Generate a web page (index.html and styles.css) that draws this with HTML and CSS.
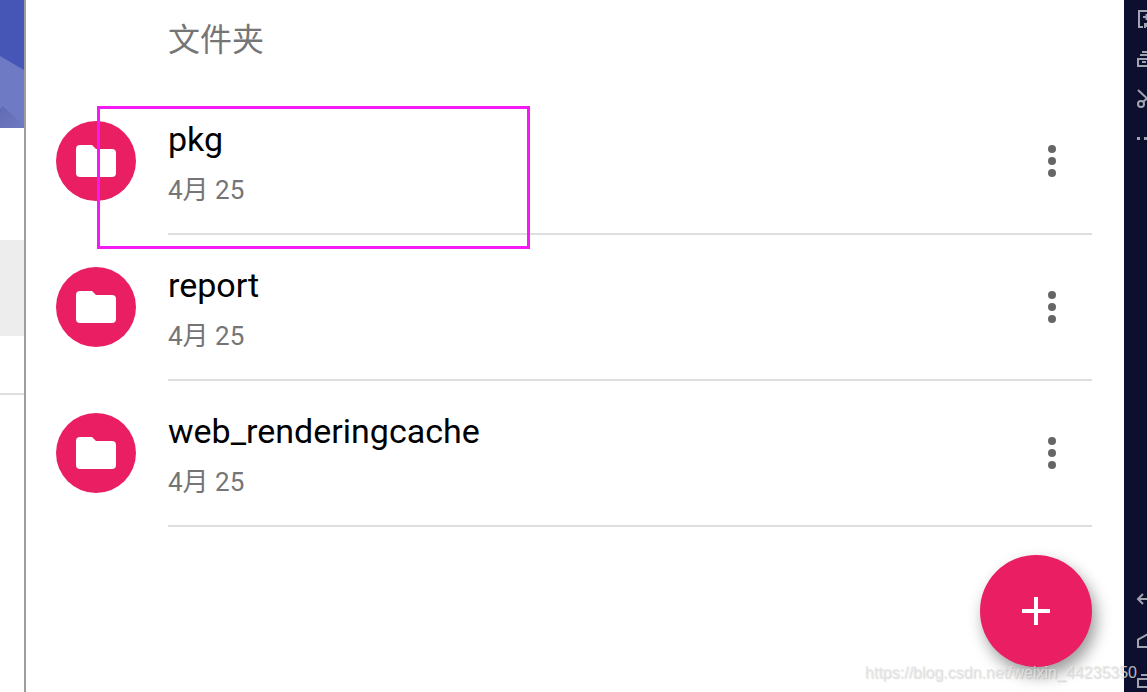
FILE: index.html
```html
<!DOCTYPE html>
<html lang="zh-CN">
<head>
<meta charset="utf-8">
<title>文件夹</title>
<link rel="stylesheet" href="styles.css">
</head>
<body>
<div class="app">
  <aside class="drawer">
    <svg class="cover" viewBox="0 0 24 128" preserveAspectRatio="none" aria-hidden="true">
      <defs>
        <linearGradient id="shade" x1="0" y1="0" x2="1" y2="1">
          <stop offset="0" stop-color="#606bb2"/>
          <stop offset="1" stop-color="#6e79c2"/>
        </linearGradient>
      </defs>
      <rect width="24" height="128" fill="#4656b6"/>
      <path d="M0 56L24 70V128H0Z" fill="#6f7ac4"/>
      <path d="M0 109L3 106L24 126V128H0Z" fill="url(#shade)"/>
    </svg>
    <div class="drawer-selected"></div>
    <div class="drawer-line"></div>
  </aside>

  <main class="files">
    <h1 class="heading">文件夹</h1>
    <ul class="list">
      <li class="row">
        <span class="avatar"><svg viewBox="0 0 40 32" aria-hidden="true"><path d="M4 0H16L20 4H36Q40 4 40 8V28Q40 32 36 32H4Q0 32 0 28V4Q0 0 4 0Z"/></svg></span>
        <div class="body">
          <div class="text"><div class="name">pkg</div><div class="date">4月 25</div></div>
          <button class="more" aria-label="pkg 更多"><svg viewBox="0 0 8 32" aria-hidden="true"><circle cx="4" cy="4" r="4"/><circle cx="4" cy="16" r="4"/><circle cx="4" cy="28" r="4"/></svg></button>
        </div>
      </li>
      <li class="row">
        <span class="avatar"><svg viewBox="0 0 40 32" aria-hidden="true"><path d="M4 0H16L20 4H36Q40 4 40 8V28Q40 32 36 32H4Q0 32 0 28V4Q0 0 4 0Z"/></svg></span>
        <div class="body">
          <div class="text"><div class="name">report</div><div class="date">4月 25</div></div>
          <button class="more" aria-label="report 更多"><svg viewBox="0 0 8 32" aria-hidden="true"><circle cx="4" cy="4" r="4"/><circle cx="4" cy="16" r="4"/><circle cx="4" cy="28" r="4"/></svg></button>
        </div>
      </li>
      <li class="row">
        <span class="avatar"><svg viewBox="0 0 40 32" aria-hidden="true"><path d="M4 0H16L20 4H36Q40 4 40 8V28Q40 32 36 32H4Q0 32 0 28V4Q0 0 4 0Z"/></svg></span>
        <div class="body">
          <div class="text"><div class="name">web_renderingcache</div><div class="date">4月 25</div></div>
          <button class="more" aria-label="web_renderingcache 更多"><svg viewBox="0 0 8 32" aria-hidden="true"><circle cx="4" cy="4" r="4"/><circle cx="4" cy="16" r="4"/><circle cx="4" cy="28" r="4"/></svg></button>
        </div>
      </li>
    </ul>
    <div class="marker"></div>
    <button class="fab" aria-label="新建"><svg viewBox="0 0 28 28" aria-hidden="true"><path d="M12 0H16V12H28V16H16V28H12V16H0V12H12Z"/></svg></button>
  </main>

  <nav class="toolbar">
    <button class="tool" aria-label="安装"><svg viewBox="0 0 24 24"><path d="M20 3H3V19H7M7 9H14M10.500 6V12M9 20V16H13M9 18H12"/></svg></button>
    <button class="tool" aria-label="多开"><svg viewBox="0 0 24 24"><path d="M6 4H18M4 7H20M2 11H22V18H2ZM6 14H10"/></svg></button>
    <button class="tool" aria-label="截图"><svg viewBox="0 0 24 24"><circle cx="5" cy="16" r="3"/><circle cx="17" cy="16" r="3"/><path d="M2 2L15 14M20 2L7 14"/></svg></button>
    <button class="tool" aria-label="更多"><svg viewBox="0 0 24 24"><path class="dots" d="M1 10.500H4M8 10.500H11M15 10.500H18"/></svg></button>
    <span class="spacer"></span>
    <button class="tool" aria-label="返回"><svg viewBox="0 0 24 24"><path d="M7 6L2 11L7 16M2 11H22"/></svg></button>
    <button class="tool" aria-label="主页"><svg viewBox="0 0 24 24"><path d="M2 19V11.500L12 6L22 11.500V19Z"/></svg></button>
    <button class="tool" aria-label="最近"><svg viewBox="0 0 24 24"><path d="M5 7H19M2 11H22V19H2Z"/></svg></button>
  </nav>
  <div class="watermark">https://blog.csdn.net/weixin_44235350</div>
</div>
</body>
</html>
```
FILE: styles.css
```css
* { box-sizing: border-box; }

body {
  margin: 0;
  background: #fff;
  font-family: Roboto, "Noto Sans CJK SC", sans-serif;
}

button {
  padding: 0;
  border: 0;
  background: none;
  cursor: pointer;
}

svg { display: block; }

.app {
  position: relative;
  display: flex;
  height: 100vh;
  overflow: hidden;
}

.drawer {
  flex: 0 0 26px;
  border-right: 2px solid #9e9e9e;
}

.cover {
  width: 100%;
  height: 128px;
}

.drawer-selected {
  height: 96px;
  margin-top: 112px;
  background: #ededed;
}

.drawer-line {
  height: 2px;
  margin-top: 57px;
  background: #dedede;
}

.files {
  position: relative;
  flex: 1;
  min-width: 0;
}

.heading {
  margin: 0;
  padding: 16px 32px 25px 142px;
  color: #757575;
  font-size: 32px;
  font-weight: 400;
  line-height: 48px;
}

.list {
  margin: 0;
  padding: 0 32px 0 30px;
  list-style: none;
}

.row {
  display: flex;
  gap: 32px;
}

.avatar {
  display: flex;
  flex: 0 0 80px;
  align-items: center;
  justify-content: center;
  height: 80px;
  margin-top: 32px;
  border-radius: 50%;
  background: #e91e63;
}

.avatar svg {
  width: 40px;
  height: 32px;
  fill: #fff;
}

.body {
  display: flex;
  flex: 1;
  align-items: center;
  justify-content: space-between;
  min-width: 0;
  height: 146px;
  border-bottom: 2px solid #dedede;
}

.text { padding-top: 6px; }

.name {
  color: #000;
  font-size: 34px;
  line-height: 52px;
}

.date {
  color: #757575;
  font-size: 26px;
  line-height: 50px;
}

.more {
  display: flex;
  align-items: center;
  justify-content: center;
  width: 80px;
  height: 80px;
}

.more svg {
  width: 8px;
  height: 32px;
  fill: #666;
}

.marker {
  position: absolute;
  top: 106px;
  left: 71px;
  width: 433px;
  height: 143px;
  border: 3px solid #f41af4;
  pointer-events: none;
}

.fab {
  position: absolute;
  right: 32px;
  bottom: 25px;
  display: flex;
  align-items: center;
  justify-content: center;
  width: 112px;
  height: 112px;
  border-radius: 50%;
  background: #e91e63;
  box-shadow: 4px 8px 16px rgba(0, 0, 0, 0.4);
}

.fab svg {
  width: 28px;
  height: 28px;
  fill: #fff;
}

.toolbar {
  z-index: 1;
  display: flex;
  flex: 0 0 23px;
  flex-direction: column;
  margin-bottom: -8px;
  overflow: hidden;
  background: #0d0f2f;
}

.tool {
  display: flex;
  flex: 0 0 40px;
  align-items: center;
  width: 36px;
  padding-left: 12px;
}

.tool svg {
  flex: none;
  width: 24px;
  height: 24px;
  fill: none;
  stroke: #a3a4b2;
  stroke-width: 2;
}

.tool .dots { stroke-width: 3; }

.spacer { flex: 1; }

.watermark {
  position: absolute;
  right: 10px;
  bottom: 8px;
  z-index: 2;
  color: rgba(230, 230, 230, 0.8);
  font-family: "Liberation Sans", Arial, sans-serif;
  font-size: 16px;
  line-height: 22px;
  text-shadow: 1px 1px 1px rgba(0, 0, 0, 0.15);
  pointer-events: none;
}
```
